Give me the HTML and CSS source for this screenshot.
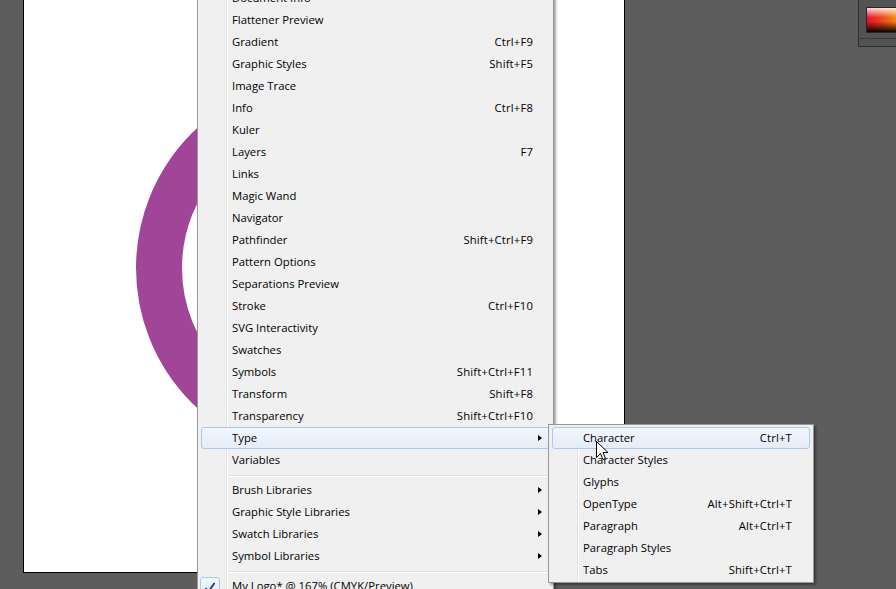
FILE: index.html
```html
<!DOCTYPE html>
<html>
<head>
<meta charset="utf-8">
<link rel="stylesheet" href="styles.css">
</head>
<body>
<div class="workspace">
  <div class="artboard"><div class="ring"></div></div>

  <div class="panel">
    <div class="spectrum"></div>
    <div class="panel-rule"></div>
  </div>

  <div class="menu main">
    <div class="item"><span class="gutter"></span><span class="label">Document Info</span><span class="key"></span><span class="sub"></span></div>
    <div class="item"><span class="gutter"></span><span class="label">Flattener Preview</span><span class="key"></span><span class="sub"></span></div>
    <div class="item"><span class="gutter"></span><span class="label">Gradient</span><span class="key">Ctrl+F9</span><span class="sub"></span></div>
    <div class="item"><span class="gutter"></span><span class="label">Graphic Styles</span><span class="key">Shift+F5</span><span class="sub"></span></div>
    <div class="item"><span class="gutter"></span><span class="label">Image Trace</span><span class="key"></span><span class="sub"></span></div>
    <div class="item"><span class="gutter"></span><span class="label">Info</span><span class="key">Ctrl+F8</span><span class="sub"></span></div>
    <div class="item"><span class="gutter"></span><span class="label">Kuler</span><span class="key"></span><span class="sub"></span></div>
    <div class="item"><span class="gutter"></span><span class="label">Layers</span><span class="key">F7</span><span class="sub"></span></div>
    <div class="item"><span class="gutter"></span><span class="label">Links</span><span class="key"></span><span class="sub"></span></div>
    <div class="item"><span class="gutter"></span><span class="label">Magic Wand</span><span class="key"></span><span class="sub"></span></div>
    <div class="item"><span class="gutter"></span><span class="label">Navigator</span><span class="key"></span><span class="sub"></span></div>
    <div class="item"><span class="gutter"></span><span class="label">Pathfinder</span><span class="key">Shift+Ctrl+F9</span><span class="sub"></span></div>
    <div class="item"><span class="gutter"></span><span class="label">Pattern Options</span><span class="key"></span><span class="sub"></span></div>
    <div class="item"><span class="gutter"></span><span class="label">Separations Preview</span><span class="key"></span><span class="sub"></span></div>
    <div class="item"><span class="gutter"></span><span class="label">Stroke</span><span class="key">Ctrl+F10</span><span class="sub"></span></div>
    <div class="item"><span class="gutter"></span><span class="label">SVG Interactivity</span><span class="key"></span><span class="sub"></span></div>
    <div class="item"><span class="gutter"></span><span class="label">Swatches</span><span class="key"></span><span class="sub"></span></div>
    <div class="item"><span class="gutter"></span><span class="label">Symbols</span><span class="key">Shift+Ctrl+F11</span><span class="sub"></span></div>
    <div class="item"><span class="gutter"></span><span class="label">Transform</span><span class="key">Shift+F8</span><span class="sub"></span></div>
    <div class="item"><span class="gutter"></span><span class="label">Transparency</span><span class="key">Shift+Ctrl+F10</span><span class="sub"></span></div>
    <div class="item hot"><span class="gutter"></span><span class="label">Type</span><span class="key"></span><span class="sub"><i class="arrow"></i></span></div>
    <div class="item"><span class="gutter"></span><span class="label">Variables</span><span class="key"></span><span class="sub"></span></div>
    <div class="sep"></div>
    <div class="item"><span class="gutter"></span><span class="label">Brush Libraries</span><span class="key"></span><span class="sub"><i class="arrow"></i></span></div>
    <div class="item"><span class="gutter"></span><span class="label">Graphic Style Libraries</span><span class="key"></span><span class="sub"><i class="arrow"></i></span></div>
    <div class="item"><span class="gutter"></span><span class="label">Swatch Libraries</span><span class="key"></span><span class="sub"><i class="arrow"></i></span></div>
    <div class="item"><span class="gutter"></span><span class="label">Symbol Libraries</span><span class="key"></span><span class="sub"><i class="arrow"></i></span></div>
    <div class="sep"></div>
    <div class="item"><span class="gutter"><span class="checkbox"><svg width="12" height="11" viewBox="0 0 12 11"><path d="M1.5 6 L4.5 9.5 L10.5 1" fill="none" stroke="#1b3499" stroke-width="1.8"/></svg></span></span><span class="label">My Logo* @ 167% (CMYK/Preview)</span><span class="key"></span><span class="sub"></span></div>
  </div>

  <div class="menu submenu">
    <div class="item hot"><span class="gutter"></span><span class="label">Character</span><span class="key">Ctrl+T</span><span class="sub"></span></div>
    <div class="item"><span class="gutter"></span><span class="label">Character Styles</span><span class="key"></span><span class="sub"></span></div>
    <div class="item"><span class="gutter"></span><span class="label">Glyphs</span><span class="key"></span><span class="sub"></span></div>
    <div class="item"><span class="gutter"></span><span class="label">OpenType</span><span class="key">Alt+Shift+Ctrl+T</span><span class="sub"></span></div>
    <div class="item"><span class="gutter"></span><span class="label">Paragraph</span><span class="key">Alt+Ctrl+T</span><span class="sub"></span></div>
    <div class="item"><span class="gutter"></span><span class="label">Paragraph Styles</span><span class="key"></span><span class="sub"></span></div>
    <div class="item"><span class="gutter"></span><span class="label">Tabs</span><span class="key">Shift+Ctrl+T</span><span class="sub"></span></div>
  </div>

  <svg class="cursor" width="13" height="20" viewBox="0 0 13 20">
    <path d="M0.5 0.5 L0.5 16.5 L4.5 12.5 L7 18.5 L9.5 17.5 L7 11.5 L12 11.5 Z" fill="#fff" stroke="#000" stroke-width="1" stroke-linejoin="miter"/>
  </svg>
</div>
</body>
</html>
```

FILE: styles.css
```css
html, body {
  margin: 0;
  padding: 0;
  height: 100%;
  overflow: hidden;
}

body {
  background: #5d5d5d;
  font-family: "Open Sans", "Noto Sans", sans-serif;
  font-size: 11.3px;
  color: #000;
}

.workspace {
  position: relative;
  width: 896px;
  height: 589px;
  overflow: hidden;
}

/* artboard on the canvas */
.artboard {
  position: absolute;
  left: 23px;
  top: -20px;
  width: 600px;
  height: 591px;
  background: #fff;
  border: 1px solid #000;
}

.ring {
  position: absolute;
  left: 112px;
  top: 96px;
  width: 290px;
  height: 290px;
  border: 46px solid #a14599;
  border-radius: 50%;
}

/* top-right panel fragment */
.panel {
  position: absolute;
  left: 858px;
  top: 0;
  width: 60px;
  height: 47px;
  background: #535353;
  border-left: 1px solid #2f2f2f;
  border-bottom: 1px solid #2f2f2f;
  padding: 7px 0 0 7px;
  box-sizing: border-box;
}

.spectrum {
  height: 24px;
  border: 1px solid #262626;
  background:
    linear-gradient(to bottom, rgba(255,255,255,0.85) 0%, rgba(255,255,255,0) 40%, rgba(0,0,0,0) 55%, rgba(0,0,0,0.95) 100%),
    linear-gradient(to right, #e8102c 0%, #f0501a 35%, #ffb000 75%, #ffe400 100%);
}

.panel-rule {
  margin: 5px 0 0 -7px;
  height: 1px;
  background: #3a3a3a;
}

/* menus */
.menu {
  position: absolute;
  background:
    linear-gradient(to right, transparent 28px, #e2e3e3 28px, #e2e3e3 29px, #ffffff 29px, #ffffff 30px, transparent 30px),
    #f0f0f0;
  border: 1px solid #979797;
  box-shadow: 2px 2px 2px rgba(0, 0, 0, 0.35);
  padding: 2px 3px;
}

.main {
  left: 197px;
  top: -16px;
  width: 349px;
  padding-bottom: 40px;
}

.submenu {
  left: 548px;
  top: 424px;
  width: 258px;
  padding-bottom: 1px;
}

.item {
  display: flex;
  align-items: center;
  height: 19px;
  padding-bottom: 1px;
  border: 1px solid transparent;
  border-radius: 3px;
  white-space: nowrap;
}

.item.hot {
  border-color: #a9caf0;
  background: linear-gradient(to bottom, #f3f7fd, #e4edf8);
}

.gutter {
  flex: none;
  width: 30px;
  height: 19px;
  display: flex;
  align-items: center;
}

.label {
  flex: 1;
}

.key {
  flex: none;
  word-spacing: 0;
  letter-spacing: 0.15px;
}

.sub {
  flex: none;
  width: 16px;
  display: flex;
  align-items: center;
  padding-left: 5px;
  box-sizing: border-box;
}

.submenu .sub {
  width: 17px;
}

.arrow {
  width: 0;
  height: 0;
  border-left: 4px solid #000;
  border-top: 3.5px solid transparent;
  border-bottom: 3.5px solid transparent;
}

.sep {
  margin: 4px 0 2px 27px;
  height: 1px;
  background: #e0e0e0;
  border-bottom: 1px solid #ffffff;
}

.checkbox {
  margin-left: -2px;
  margin-top: 3px;
  width: 20px;
  height: 20px;
  box-sizing: border-box;
  border: 1px solid #a9caf0;
  border-radius: 3px;
  background: linear-gradient(to bottom, #f3f7fd, #e4edf8);
  display: flex;
  align-items: center;
  justify-content: center;
}

.cursor {
  position: absolute;
  left: 596px;
  top: 441px;
}
```
